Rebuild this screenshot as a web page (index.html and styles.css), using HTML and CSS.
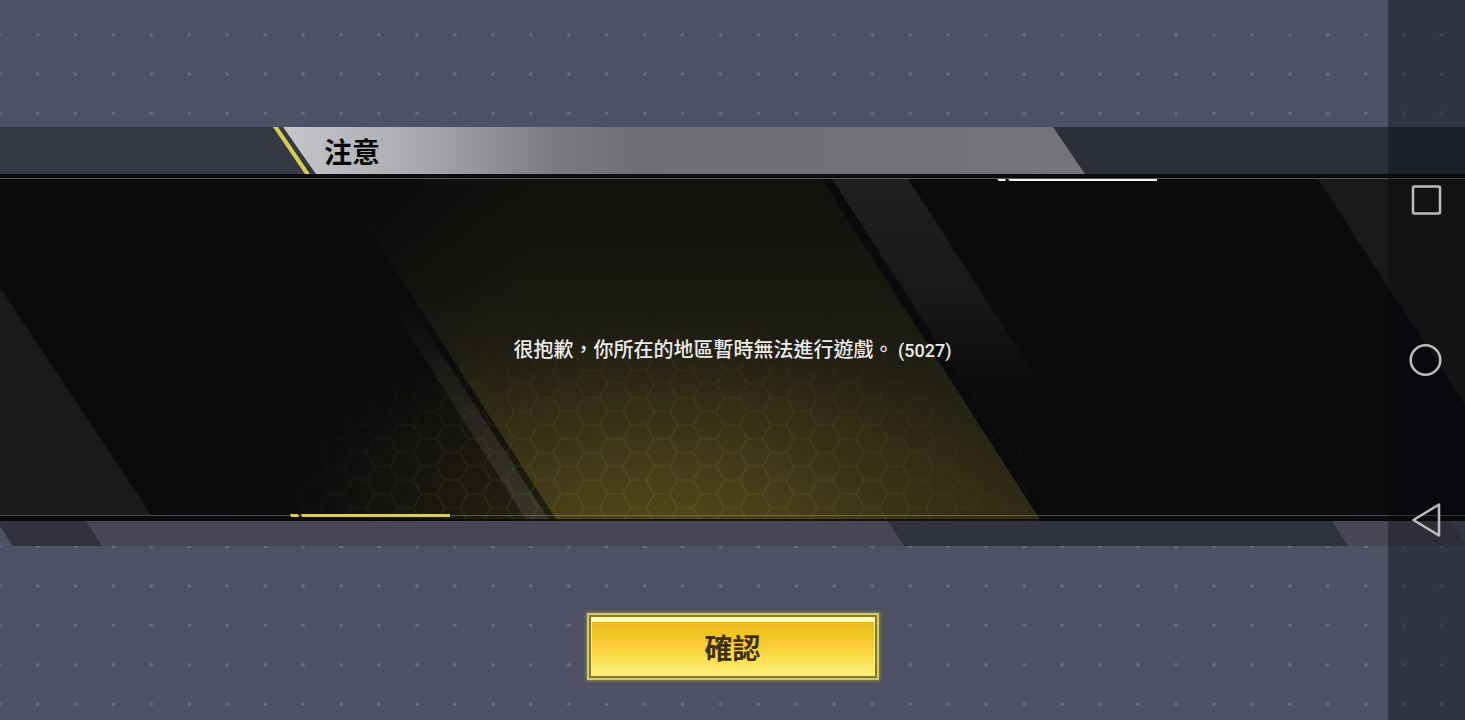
FILE: index.html
```
<!DOCTYPE html>
<html lang="zh-Hant">
<head>
    <meta charset="utf-8">
    <title>注意</title>
    <link rel="stylesheet" href="styles.css">
</head>
<body>
<svg class="dots" aria-hidden="true">
    <defs>
        <pattern id="dot" width="37.95" height="39.37" patternUnits="userSpaceOnUse" x="18.5" y="15.1">
            <circle cx="19" cy="19.7" r="1.8" fill="#6e6e82"/>
        </pattern>
    </defs>
    <rect width="100%" height="100%" fill="url(#dot)"/>
</svg>

<main class="dialog">
    <header class="titleBar">
        <span class="slash"></span>
        <h1 class="title">注意</h1>
    </header>

    <section class="panel">
        <svg class="art" viewBox="0 0 1465 347" preserveAspectRatio="xMidYMid slice" aria-hidden="true">
            <defs>
                <linearGradient id="band" x1="0" y1="0" x2="0" y2="1">
                    <stop offset="0" stop-color="#11110e"/>
                    <stop offset="0.35" stop-color="#191810"/>
                    <stop offset="0.65" stop-color="#242214"/>
                    <stop offset="1" stop-color="#2f2b15"/>
                </linearGradient>
                <radialGradient id="bandSide" gradientUnits="userSpaceOnUse" cx="0" cy="0" r="1" gradientTransform="translate(337 5) scale(200 230)">
                    <stop offset="0" stop-color="#0b0b0c"/>
                    <stop offset="1" stop-color="#0b0b0c" stop-opacity="0"/>
                </radialGradient>
                <radialGradient id="glow" gradientUnits="userSpaceOnUse" cx="0" cy="0" r="1" gradientTransform="translate(670 360) scale(370 210)">
                    <stop offset="0" stop-color="#7c6a22" stop-opacity="0.48"/>
                    <stop offset="0.4" stop-color="#6c5c20" stop-opacity="0.36"/>
                    <stop offset="1" stop-color="#544c1c" stop-opacity="0"/>
                </radialGradient>
                <radialGradient id="spill" gradientUnits="userSpaceOnUse" cx="0" cy="0" r="1" gradientTransform="translate(570 350) scale(290 190)">
                    <stop offset="0" stop-color="#3a3316" stop-opacity="0.6"/>
                    <stop offset="1" stop-color="#3a3316" stop-opacity="0"/>
                </radialGradient>
                <linearGradient id="ribUp" x1="0" y1="0" x2="0" y2="1">
                    <stop offset="0" stop-color="#1f1f21"/>
                    <stop offset="0.5" stop-color="#18181a"/>
                    <stop offset="1" stop-color="#121212" stop-opacity="0"/>
                </linearGradient>
                <linearGradient id="ribDown" x1="0" y1="0" x2="0" y2="1">
                    <stop offset="0" stop-color="#38352c" stop-opacity="0"/>
                    <stop offset="1" stop-color="#38352c" stop-opacity="0.95"/>
                </linearGradient>
                <linearGradient id="ribShade" x1="0" y1="0" x2="0" y2="1">
                    <stop offset="0" stop-color="#0b0b0a" stop-opacity="0"/>
                    <stop offset="0.5" stop-color="#0d0c0a"/>
                    <stop offset="1" stop-color="#221f10"/>
                </linearGradient>
                <pattern id="hex" width="46.6" height="27.5" patternUnits="userSpaceOnUse" x="9.5" y="3.6">
                    <path d="M0 13.75H7.8L15.5 0H31.1L38.8 13.75H46.6M7.8 13.75L15.5 27.5H31.1L38.8 13.75" fill="none" stroke="#83753c" stroke-width="1.2"/>
                </pattern>
                <radialGradient id="hexFade" gradientUnits="userSpaceOnUse" cx="0" cy="0" r="1" gradientTransform="translate(670 350) scale(430 230)">
                    <stop offset="0" stop-color="#fff" stop-opacity="0.38"/>
                    <stop offset="0.5" stop-color="#fff" stop-opacity="0.22"/>
                    <stop offset="1" stop-color="#fff" stop-opacity="0"/>
                </radialGradient>
                <mask id="hexMask" maskUnits="userSpaceOnUse" x="0" y="0" width="1465" height="347">
                    <rect width="1465" height="347" fill="url(#hexFade)"/>
                </mask>
            </defs>
            <rect width="1465" height="347" fill="#0b0b0d"/>
            <path d="M0 113L151 341H0z" fill="#1a1a1a"/>
            <path d="M1318 5H1465V231z" fill="#1a1a1a"/>
            <rect x="250" y="140" width="600" height="207" fill="url(#spill)"/>
            <path d="M832 5H908L1060 240H983z" fill="url(#ribUp)"/>
            <path d="M337 5H822L1041 347H557z" fill="url(#band)"/>
            <path d="M337 5H822L1041 347H557z" fill="url(#glow)"/>
            <path d="M337 5H822L1041 347H557z" fill="url(#bandSide)"/>
            <path d="M822 5H832L1051 347H1041z" fill="#0a0a0b"/>
            <path d="M390 130H410L550 347H527z" fill="url(#ribDown)"/>
            <path d="M354 45H361L557 347H550z" fill="url(#ribShade)"/>
            <rect width="1465" height="347" fill="url(#hex)" mask="url(#hexMask)"/>
            <path d="M0 0H1465V4H0z" fill="#0c0c0d"/>
            <path d="M0 4H1465V5H0z" fill="#59595b"/>
            <path d="M0 341H1465V342H0z" fill="#8c8270" fill-opacity="0.55"/>
            <path d="M0 345H1465V347H0z" fill="#0b0a0b" fill-opacity="0.8"/>
            <path d="M997 5H1005L1006 7H999zM1008 5H1157V7H1010z" fill="#f4f4f4"/>
            <path d="M290 340H298L299 343H291zM301 340H450V343H302z" fill="#d8cd5c"/>
        </svg>
        <p class="message">很抱歉，你所在的地區暫時無法進行遊戲。<span class="code"> (5027)</span></p>
    </section>

    <svg class="ledge" viewBox="0 0 1465 25" preserveAspectRatio="xMidYMid slice" aria-hidden="true">
        <path d="M0 0H1451L1465 22V25H13L0 5z" fill="#464655"/>
        <path d="M0 0H86L102 25H13L0 5z" fill="#31323d"/>
        <path d="M888 0H1332L1348 25H904z" fill="#30323d"/>
    </svg>

    <button class="confirm" type="button"><span class="face">確認</span></button>
</main>

<nav class="sysBar">
    <button class="sysKey" type="button" aria-label="recent">
        <svg viewBox="0 0 36 36"><rect x="4" y="4.500" width="27" height="27" rx="1.500"/></svg>
    </button>
    <button class="sysKey" type="button" aria-label="home">
        <svg viewBox="0 0 36 36"><circle cx="16.500" cy="18" r="14.800"/></svg>
    </button>
    <button class="sysKey" type="button" aria-label="back">
        <svg viewBox="0 0 36 36"><path d="M30 2.500V33.500L4.500 18z"/></svg>
    </button>
</nav>
</body>
</html>
```
FILE: styles.css
```
* { box-sizing: border-box; }
body {
    margin: 0;
    min-height: 100vh;
    position: relative;
    overflow: hidden;
    background: #4f5063;
    font-family: "Noto Sans CJK TC", "Noto Sans", sans-serif;
}
.dots {
    position: absolute;
    top: 0;
    left: 0;
    width: 100%;
    height: 100%;
}
.dialog {
    position: relative;
    display: flex;
    flex-direction: column;
    padding-top: 127px;
}

/* title */
.titleBar {
    display: flex;
    height: 47px;
    padding: 0 380px 0 273px;
    background: linear-gradient(90deg, rgba(49, 53, 61, 0.84) 0%, rgba(49, 53, 61, 0.84) 20%, rgba(39, 41, 49, 0.86) 75%);
}
.slash {
    width: 43px;
    margin-right: -33px;
    background: #d8cb52;
    clip-path: polygon(0 0, 5px 0, 37px 100%, 32px 100%);
}
.title {
    flex: 1;
    margin: 0;
    padding-left: 41px;
    background: linear-gradient(90deg, #c5c6ca 0, #adaeb2 120px, #939498 200px, #7c7c80 270px, #6e6e73 350px, #747377 100%);
    clip-path: polygon(0 0, calc(100% - 32px) 0, 100% 100%, 33px 100%);
    color: #08080a;
    font-size: 28px;
    font-weight: 700;
    line-height: 48px;
}

/* message */
.panel {
    position: relative;
    display: flex;
    align-items: center;
    justify-content: center;
    min-height: 347px;
    padding-top: 4px;
    background: #0b0b0d;
}
.art {
    position: absolute;
    top: 0;
    left: 0;
    width: 100%;
    height: 100%;
}
.message {
    position: relative;
    margin: 0;
    color: #ececea;
    font-size: 20px;
    font-weight: 500;
    line-height: 28px;
    white-space: pre-wrap;
}
.code {
    font-family: "Liberation Sans Narrow", Roboto, sans-serif;
    font-size: 18px;
}
.ledge {
    width: 100%;
    height: 25px;
}

/* confirm button */
.confirm {
    align-self: center;
    width: 292px;
    height: 67px;
    margin-top: 67px;
    padding: 2px;
    border: 2px solid #d3ca70;
    background: #8a7a26;
    box-shadow: 0 0 3px 1px #8d8440;
    font-family: inherit;
    cursor: pointer;
}
.face {
    display: flex;
    align-items: center;
    justify-content: center;
    height: 100%;
    padding-bottom: 4px;
    border: 1px solid #fdf08a;
    border-top: 5px solid #fffbb4;
    background: linear-gradient(#f0b929 0%, #ebc51d 20%, #fdc935 38%, #fbd23c 52%, #fae050 70%, #fdf080 100%);
    color: #403208;
    font-size: 28px;
    font-weight: 700;
    line-height: 40px;
}

/* phone keys */
.sysBar {
    position: absolute;
    top: 0;
    right: 0;
    display: flex;
    flex-direction: column;
    align-items: center;
    justify-content: center;
    gap: 124px;
    width: 77px;
    height: 100%;
    background: rgba(4, 8, 10, 0.38);
}
.sysKey {
    width: 36px;
    height: 36px;
    padding: 0;
    border: 0;
    background: none;
}
.sysKey svg {
    display: block;
    fill: none;
    stroke: #bdbdbd;
    stroke-width: 2.5px;
    stroke-linejoin: round;
}
```
